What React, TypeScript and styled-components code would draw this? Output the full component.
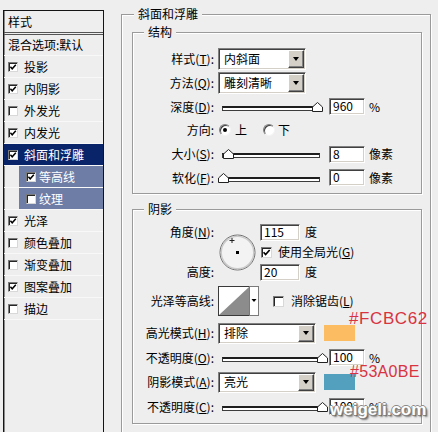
import React from "react";
import styled, { createGlobalStyle } from "styled-components";

const FONT = `"Noto Sans CJK SC", "Liberation Sans", sans-serif`;
const BG = "#eeeeee";

const GlobalStyle = createGlobalStyle`
  html, body { margin: 0; padding: 0; background: ${BG}; }
  body { font-family: ${FONT}; font-size: 12px; color: #000; }
  * { box-sizing: border-box; }
`;

const Page = styled.div`
  position: relative;
  display: flex;
  align-items: flex-start;
  width: 438px;
  height: 432px;
  overflow: hidden;
  padding: 10px 0 0 3px;
  background: ${BG};
`;

/* ---------- sidebar ---------- */
const Sidebar = styled.div`
  flex: none;
  width: 101px;
  height: 440px;
  border: 1px solid #141414;
  border-bottom: none;
  box-shadow: inset 1px 0 0 #8a8a8a;
  display: flex;
  flex-direction: column;
`;

const SideHeader = styled.div`
  height: 24px;
  line-height: 21px;
  padding-left: 4px;
  border-bottom: 3px double #555;
`;

const SideBlend = styled.div`
  height: 21px;
  line-height: 20px;
  padding-left: 4px;
  border-bottom: 1px solid #f8f8f8;
`;

const SideItem = styled.div<{ $sub?: boolean }>`
  height: 22px;
  display: flex;
  border-bottom: 1px solid #f8f8f8;
  padding-left: ${(p) => (p.$sub ? 15 : 0)}px;
`;

const SideInner = styled.div<{ $active?: boolean; $sub?: boolean }>`
  flex: 1;
  display: flex;
  align-items: center;
  gap: ${(p) => (p.$sub ? 3 : 6)}px;
  padding-left: ${(p) => (p.$sub ? 7 : 4)}px;
  background: ${(p) => (p.$active ? (p.$sub ? "#6e7da6" : "#0a246a") : "transparent")};
  color: ${(p) => (p.$active ? "#fff" : "#000")};
  white-space: nowrap;
`;

const CheckBox = styled.span<{ $size: number }>`
  flex: none;
  width: ${(p) => p.$size}px;
  height: ${(p) => p.$size}px;
  background: #fff;
  border: 1px solid;
  border-color: #7a7a7a #d8d8d8 #d8d8d8 #7a7a7a;
  box-shadow: inset 1px 1px 0 #262626;
  display: flex;
  align-items: center;
  justify-content: center;
`;

const Check: React.FC<{ on: boolean; size?: number }> = ({ on, size = 10 }) => (
  <CheckBox $size={size}>
    {on && (
      <svg width={size - 2} height={size - 2} viewBox="0 0 8 8">
        <path d="M1.4 3.8 L3.2 5.8 L6.8 1.8" stroke="#000" strokeWidth="1.5" fill="none" />
      </svg>
    )}
  </CheckBox>
);

/* ---------- main groups ---------- */
const Main = styled.div`
  margin: 4px 0 0 17px;
`;

const Group = styled.div<{ $w: number; $h?: number; $pad: string; $mt?: number }>`
  position: relative;
  width: ${(p) => p.$w}px;
  ${(p) => (p.$h ? `height: ${p.$h}px;` : "")}
  margin-top: ${(p) => p.$mt ?? 0}px;
  padding: ${(p) => p.$pad};
  border: 1px solid #9a9a9a;
  box-shadow: inset 1px 1px 0 #fff, 1px 1px 0 #fff;
`;

const Legend = styled.span<{ $left: number }>`
  position: absolute;
  top: -10px;
  left: ${(p) => p.$left}px;
  padding: 0 4px;
  background: ${BG};
  line-height: 17px;
  white-space: nowrap;
`;

const Row = styled.div<{ $h: number; $mt?: number }>`
  position: relative;
  display: flex;
  align-items: center;
  height: ${(p) => p.$h}px;
  margin-top: ${(p) => p.$mt ?? 0}px;
  white-space: nowrap;
`;

const Label = styled.div`
  flex: none;
  width: 81px;
  margin-right: 4px;
  text-align: right;
  line-height: 14px;
`;

const sunken = `
  background: #fff;
  border: 1px solid;
  border-color: #808080 #ffffff #ffffff #808080;
  box-shadow: inset 1px 1px 0 #404040, inset -1px -1px 0 #d4d0c8;
`;

const SelectBox = styled.div<{ $w: number; $h: number }>`
  ${sunken}
  flex: none;
  width: ${(p) => p.$w}px;
  height: ${(p) => p.$h}px;
  display: flex;
  align-items: stretch;
`;

const SelectText = styled.span`
  flex: 1;
  align-self: center;
  padding-left: 5px;
  line-height: 14px;
`;

const DropButton = styled.span`
  flex: none;
  width: 16px;
  margin: 1px;
  background: #d4d0c8;
  border: 1px solid;
  border-color: #ffffff #404040 #404040 #ffffff;
  box-shadow: inset -1px -1px 0 #808080;
  display: flex;
  align-items: center;
  justify-content: center;
  &::after {
    content: "";
    border-left: 3.5px solid transparent;
    border-right: 3.5px solid transparent;
    border-top: 4px solid #000;
    margin-right: 1px;
  }
`;

const Select: React.FC<{ value: string; w: number; h: number }> = ({ value, w, h }) => (
  <SelectBox $w={w} $h={h}>
    <SelectText>{value}</SelectText>
    <DropButton />
  </SelectBox>
);

const TextInput = styled.div<{ $w: number; $ml?: number }>`
  ${sunken}
  flex: none;
  width: ${(p) => p.$w}px;
  height: 17px;
  margin-left: ${(p) => p.$ml ?? 0}px;
  padding-left: 3px;
  line-height: 14px;
  font-size: 12px;
`;

const Unit = styled.span<{ $ml?: number }>`
  margin-left: ${(p) => p.$ml ?? 4}px;
  line-height: 14px;
`;

const SliderWrap = styled.div`
  position: relative;
  flex: none;
  width: 104px;
  height: 10px;
  margin-right: 7px;
  display: flex;
  align-items: flex-end;
`;

const Track = styled.div`
  margin: 0 0 1px 4px;
  width: 98px;
  height: 5px;
  background: #fff;
  border-top: 2px solid #1e1e1e;
  border-bottom: 1px solid #3c3c3c;
  border-left: 1px solid #3c3c3c;
  border-right: 1px solid #3c3c3c;
`;

const Thumb = styled.svg`
  position: absolute;
  top: 0;
`;

const Slider: React.FC<{ pos: number }> = ({ pos }) => (
  <SliderWrap>
    <Track />
    <Thumb width="11" height="10" viewBox="0 0 11 10" style={{ left: pos }}>
      <polygon points="0.5,9.5 0.5,5 5.5,0.5 10.5,5 10.5,9.5" fill="#fff" stroke="#222" strokeWidth="1" />
    </Thumb>
  </SliderWrap>
);

const Radio = styled.span<{ $on?: boolean; $ml: number }>`
  flex: none;
  width: 12px;
  height: 12px;
  margin-left: ${(p) => p.$ml}px;
  border-radius: 50%;
  background: #fff;
  border: 1px solid;
  border-color: #808080 #f4f4f4 #f4f4f4 #808080;
  box-shadow: inset 1px 1px 0 #404040;
  display: flex;
  align-items: center;
  justify-content: center;
  &::after {
    content: "";
    width: 4px;
    height: 4px;
    border-radius: 50%;
    background: ${(p) => (p.$on ? "#000" : "transparent")};
  }
`;

const RadioText = styled.span<{ $ml: number }>`
  margin-left: ${(p) => p.$ml}px;
  line-height: 14px;
`;

const AngleGrid = styled.div`
  display: grid;
  grid-template-columns: 81px 46px auto;
  grid-template-rows: repeat(3, 20px);
  align-items: center;
  white-space: nowrap;
`;

const GridLabel = styled.div<{ $row: number }>`
  grid-column: 1;
  grid-row: ${(p) => p.$row};
  text-align: right;
  line-height: 14px;
`;

const DialCell = styled.div`
  grid-column: 2;
  grid-row: 1 / 4;
  margin-left: 5px;
  display: flex;
`;

const GridCell = styled.div<{ $row: number }>`
  grid-column: 3;
  grid-row: ${(p) => p.$row};
  display: flex;
  align-items: center;
`;

const CheckLabel = styled.span<{ $ml: number }>`
  margin-left: ${(p) => p.$ml}px;
  line-height: 14px;
`;

const CheckWrap = styled.span<{ $ml: number }>`
  margin-left: ${(p) => p.$ml}px;
  display: flex;
`;

const ContourWrap = styled.div`
  flex: none;
  display: flex;
`;

const Swatch = styled.span<{ $color: string }>`
  flex: none;
  width: 31px;
  height: 16px;
  margin-left: 8px;
  background: ${(p) => p.$color};
`;

const HexNote = styled.span<{ $top: number; $left: number; $size: number; $ls: number }>`
  position: absolute;
  top: ${(p) => p.$top}px;
  left: ${(p) => p.$left}px;
  font-family: "Liberation Sans", Arial, sans-serif;
  font-size: ${(p) => p.$size}px;
  line-height: 12px;
  letter-spacing: ${(p) => p.$ls}px;
  color: #d8333f;
`;

const Watermark = styled.span`
  position: absolute;
  top: 403px;
  left: 330px;
  font-family: "Liberation Sans", Arial, sans-serif;
  font-weight: bold;
  font-size: 17px;
  line-height: 13px;
  color: #ffffff;
  text-shadow: 1px 0 0 #8a8a8a, -1px 0 0 #8a8a8a, 0 1px 0 #8a8a8a, 0 -1px 0 #8a8a8a,
    1px 1px 1px #555, 2px 2px 2px #777;
`;

const Dial = () => (
  <svg width="37" height="37" viewBox="0 0 37 37">
    <circle cx="18.5" cy="18.5" r="17.5" fill="#f3f3f3" stroke="#6f6f6f" strokeWidth="1" />
    <circle cx="18.5" cy="18.5" r="16.2" fill="none" stroke="#c9c9c9" strokeWidth="1.3" />
    <path d="M10.5 6.5h5M13 4v5" stroke="#222" strokeWidth="1" />
    <rect x="17" y="17" width="3" height="3" fill="#000" />
  </svg>
);

const Contour = () => (
  <svg width="41" height="30" viewBox="0 0 41 30">
    <rect x="0.5" y="0.5" width="31" height="29" fill="#fff" stroke="#3a3a3a" />
    <polygon points="1,29 31,1 31,29" fill="#8c8c8c" />
    <rect x="31.5" y="0.5" width="9" height="29" fill="#fff" stroke="#7a7a7a" />
    <polygon points="33.5,13 38.5,13 36,16" fill="#000" />
  </svg>
);

const sideItems: { name: string; on: boolean; active?: boolean; sub?: boolean }[] = [
  { name: "投影", on: true },
  { name: "内阴影", on: true },
  { name: "外发光", on: false },
  { name: "内发光", on: true },
  { name: "斜面和浮雕", on: true, active: true },
  { name: "等高线", on: true, active: true, sub: true },
  { name: "纹理", on: false, active: true, sub: true },
  { name: "光泽", on: true },
  { name: "颜色叠加", on: false },
  { name: "渐变叠加", on: false },
  { name: "图案叠加", on: true },
  { name: "描边", on: false },
];

export default function App() {
  return (
    <>
      <GlobalStyle />
      <Page>
        <Sidebar>
          <SideHeader>样式</SideHeader>
          <SideBlend>混合选项:默认</SideBlend>
          {sideItems.map((it) => (
            <SideItem key={it.name} $sub={it.sub}>
              <SideInner $active={it.active} $sub={it.sub}>
                <Check on={it.on} size={10} />
                <span>{it.name}</span>
              </SideInner>
            </SideItem>
          ))}
        </Sidebar>

        <Main>
          <Group $w={310} $h={440} $pad="17px 8px 0 10px">
            <Legend $left={12}>斜面和浮雕</Legend>

            <Group $w={290} $pad="14px 0 4px 0">
              <Legend $left={11}>结构</Legend>
              <Row $h={24}>
                <Label>样式(<u>T</u>):</Label>
                <Select value="内斜面" w={88} h={22} />
              </Row>
              <Row $h={24}>
                <Label>方法(<u>Q</u>):</Label>
                <Select value="雕刻清晰" w={88} h={22} />
              </Row>
              <Row $h={23}>
                <Label>深度(<u>D</u>):</Label>
                <Slider pos={94} />
                <TextInput $w={36}>960</TextInput>
                <Unit>%</Unit>
              </Row>
              <Row $h={24}>
                <Label>方向:</Label>
                <Radio $on $ml={1} />
                <RadioText $ml={4}>上</RadioText>
                <Radio $ml={16} />
                <RadioText $ml={3}>下</RadioText>
              </Row>
              <Row $h={24}>
                <Label>大小(<u>S</u>):</Label>
                <Slider pos={5} />
                <TextInput $w={36}>8</TextInput>
                <Unit>像素</Unit>
              </Row>
              <Row $h={23}>
                <Label>软化(<u>F</u>):</Label>
                <Slider pos={0} />
                <TextInput $w={36}>0</TextInput>
                <Unit>像素</Unit>
              </Row>
            </Group>

            <Group $w={290} $mt={15} $pad="12px 0 4px 0">
              <Legend $left={11}>阴影</Legend>
              <AngleGrid>
                <GridLabel $row={1}>角度(<u>N</u>):</GridLabel>
                <DialCell>
                  <Dial />
                </DialCell>
                <GridCell $row={1}>
                  <TextInput $w={40}>115</TextInput>
                  <Unit $ml={5}>度</Unit>
                </GridCell>
                <GridCell $row={2}>
                  <CheckWrap $ml={1}>
                    <Check on size={11} />
                  </CheckWrap>
                  <CheckLabel $ml={6}>使用全局光(<u>G</u>)</CheckLabel>
                </GridCell>
                <GridLabel $row={3}>高度:</GridLabel>
                <GridCell $row={3}>
                  <TextInput $w={40}>20</TextInput>
                  <Unit $ml={5}>度</Unit>
                </GridCell>
              </AngleGrid>

              <Row $h={30} $mt={4}>
                <Label>光泽等高线:</Label>
                <ContourWrap>
                  <Contour />
                </ContourWrap>
                <CheckWrap $ml={14}>
                  <Check on={false} size={11} />
                </CheckWrap>
                <CheckLabel $ml={7}>消除锯齿(<u>L</u>)</CheckLabel>
              </Row>

              <Row $h={24} $mt={5}>
                <Label>高光模式(<u>H</u>):</Label>
                <Select value="排除" w={98} h={21} />
                <Swatch $color="#FCBC62" />
                <HexNote $top={-8} $left={216} $size={17} $ls={0.6}>#FCBC62</HexNote>
              </Row>
              <Row $h={25}>
                <Label>不透明度(<u>O</u>):</Label>
                <Slider pos={99} />
                <TextInput $w={36}>100</TextInput>
                <Unit>%</Unit>
              </Row>
              <Row $h={24}>
                <Label>阴影模式(<u>A</u>):</Label>
                <Select value="亮光" w={98} h={21} />
                <Swatch $color="#53A0BE" />
                <HexNote $top={-4} $left={217} $size={16} $ls={0.3}>#53A0BE</HexNote>
              </Row>
              <Row $h={25}>
                <Label>不透明度(<u>C</u>):</Label>
                <Slider pos={99} />
                <TextInput $w={36}>100</TextInput>
                <Unit>%</Unit>
              </Row>
            </Group>
          </Group>
        </Main>

        <Watermark>weigeli.com</Watermark>
      </Page>
    </>
  );
}
